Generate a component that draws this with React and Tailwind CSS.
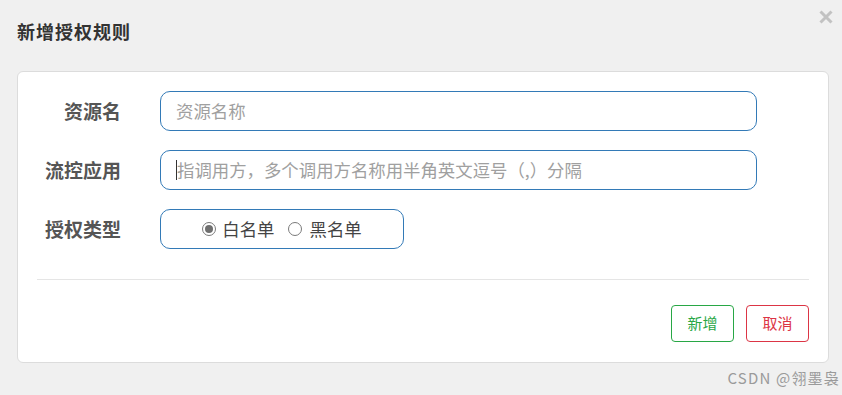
import React from "react";

const font = { fontFamily: '"Noto Sans CJK SC", "Liberation Sans", sans-serif' };

function Radio({ checked }) {
  return (
    <span className="w-[14px] h-[14px] rounded-full border border-[#7a7a7a] flex items-center justify-center bg-white">
      {checked && <span className="w-[8px] h-[8px] rounded-full bg-[#6f6f6f]" />}
    </span>
  );
}

export default function App() {
  return (
    <div
      className="relative w-[842px] h-[395px] bg-[#f0f0f0] overflow-hidden font-['Noto_Sans_CJK_SC',sans-serif]"
      style={font}
    >
      <svg className="absolute left-[819px] top-[10px]" width="14" height="14" viewBox="0 0 14 14">
        <path d="M1.5 1.5 L12.5 12.5 M12.5 1.5 L1.5 12.5" stroke="#c2c2c2" strokeWidth="3" strokeLinecap="butt" />
      </svg>
      <div className="pl-[17px] pt-[18px] h-[71px]">
        <h1 className="text-[18px] leading-[26px] font-bold text-[#333] tracking-[1px]">新增授权规则</h1>
      </div>
      <div className="ml-[17px] w-[812px] h-[292px] bg-white border border-[#dcdcdc] rounded-[6px] px-[19px] pt-[19px]">
        <div className="flex items-center h-[40px]">
          <label className="w-[84px] text-right text-[19px] font-bold text-[#555]">资源名</label>
          <div className="ml-[39px] w-[597px] h-[40px] border border-[#337ab7] rounded-[10px] flex items-center pl-[15px] text-[17.4px] text-[#a0a0a0]">
            资源名称
          </div>
        </div>
        <div className="flex items-center h-[40px] mt-[19px]">
          <label className="w-[84px] text-right text-[19px] font-bold text-[#555]">流控应用</label>
          <div className="ml-[39px] w-[597px] h-[40px] border border-[#337ab7] rounded-[10px] flex items-center pl-[15px] text-[17.4px] text-[#a0a0a0]">
            <span className="w-[1px] h-[20px] bg-[#333]" />
            <span>指调用方，多个调用方名称用半角英文逗号（,）分隔</span>
          </div>
        </div>
        <div className="flex items-center h-[40px] mt-[19px]">
          <label className="w-[84px] text-right text-[19px] font-bold text-[#555]">授权类型</label>
          <div className="ml-[39px] w-[244px] h-[40px] border border-[#337ab7] rounded-[10px] flex items-center justify-center text-[17.4px] text-[#444]">
            <Radio checked />
            <span className="ml-[6px]">白名单</span>
            <span className="ml-[13px]"><Radio /></span>
            <span className="ml-[8px]">黑名单</span>
          </div>
        </div>
        <div className="mt-[30px] h-px bg-[#e5e5e5]" />
        <div className="flex justify-end gap-[12px] mt-[25px]">
          <button className="w-[63px] h-[37px] border border-[#28a745] text-[#28a745] rounded-[4px] text-[15px] bg-white">新增</button>
          <button className="w-[63px] h-[37px] border border-[#dc3545] text-[#dc3545] rounded-[4px] text-[15px] bg-white">取消</button>
        </div>
      </div>
      <div className="flex justify-end pr-[2px] mt-[5px] text-[15px] leading-[20px] tracking-[1.2px] text-[#9a9a9a]">CSDN @翎墨袅</div>
    </div>
  );
}
